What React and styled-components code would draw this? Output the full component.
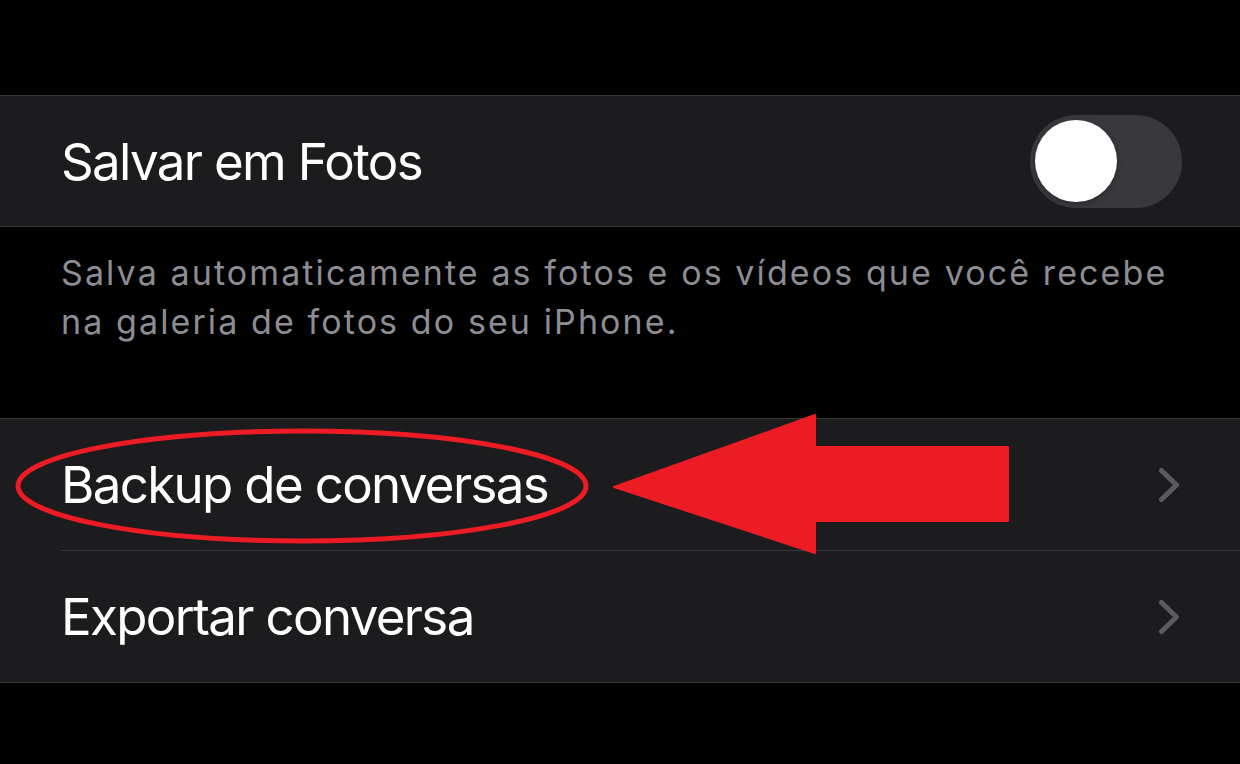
import React from "react";
import styled, { createGlobalStyle } from "styled-components";

const Global = createGlobalStyle`
  html, body { margin: 0; padding: 0; background: #000; }
  body { font-family: Inter, "Noto Sans", "Liberation Sans", sans-serif; -webkit-font-smoothing: antialiased; }
`;

const Page = styled.div`
  width: 1240px;
  height: 764px;
  background: #000;
  padding-top: 95px;
  box-sizing: border-box;
  overflow: hidden;
`;

const Group = styled.div`
  background: #1c1c1e;
  border-top: 1px solid #38383a;
  border-bottom: 1px solid #38383a;
`;

const Row = styled.div`
  position: relative;
  display: flex;
  height: ${(p) => p.$h || 130}px;
  padding-left: 61px;
  box-sizing: border-box;
`;

const RowInner = styled.div`
  flex: 1;
  display: flex;
  align-items: center;
  justify-content: space-between;
  padding-right: ${(p) => p.$pr || 58}px;
  border-bottom: ${(p) => (p.$divider ? "1px solid #38383a" : "none")};
`;

const Label = styled.span`
  color: #fff;
  font-size: 51px;
  letter-spacing: -1.65px;
  white-space: nowrap;
`;

const Toggle = styled.div`
  width: 152px;
  height: 93px;
  border-radius: 47px;
  background: #39393d;
  display: flex;
  align-items: center;
  padding-left: 5px;
  box-sizing: border-box;
`;

const Knob = styled.div`
  width: 82px;
  height: 82px;
  border-radius: 50%;
  background: #fff;
  box-shadow: 0 2px 6px rgba(0, 0, 0, 0.25);
`;

const Footer = styled.p`
  margin: 0;
  padding: 21px 61px 0;
  height: 191px;
  box-sizing: border-box;
  color: #8d8d93;
  font-size: 34px;
  line-height: 49px;
  letter-spacing: 2.1px;
  white-space: nowrap;
`;

const Overlay = styled.svg`
  position: absolute;
  left: 0;
  top: 0;
  overflow: visible;
  pointer-events: none;
`;

const Chevron = () => (
  <svg width="22" height="36" viewBox="0 0 22 36">
    <path
      d="M3.5 3.5 L18.5 18 L3.5 32.5"
      fill="none"
      stroke="#5b5b5f"
      strokeWidth="5"
      strokeLinecap="round"
      strokeLinejoin="round"
    />
  </svg>
);

export default function App() {
  return (
    <>
      <Global />
      <Page>
        <Group>
          <Row $h={130}>
            <RowInner>
              <Label>Salvar em Fotos</Label>
              <Toggle>
                <Knob />
              </Toggle>
            </RowInner>
          </Row>
        </Group>
        <Footer>
          Salva automaticamente as fotos e os vídeos que você recebe
          <br />
          na galeria de fotos do seu iPhone.
        </Footer>
        <Group>
          <Row $h={132}>
            <RowInner $divider $pr={60}>
              <Label>Backup de conversas</Label>
              <Chevron />
            </RowInner>
            <Overlay width="1240" height="132" viewBox="0 0 1240 132">
              <ellipse
                cx="302"
                cy="67"
                rx="284"
                ry="55"
                fill="none"
                stroke="#ed1c24"
                strokeWidth="5"
              />
              <polygon
                points="614,68 815,-4 815,28 1008,28 1008,102 815,102 815,134"
                fill="#ed1c24"
                strokeLinejoin="round"
                stroke="#ed1c24"
                strokeWidth="2"
              />
            </Overlay>
          </Row>
          <Row $h={131}>
            <RowInner $pr={60}>
              <Label>Exportar conversa</Label>
              <Chevron />
            </RowInner>
          </Row>
        </Group>
      </Page>
    </>
  );
}
